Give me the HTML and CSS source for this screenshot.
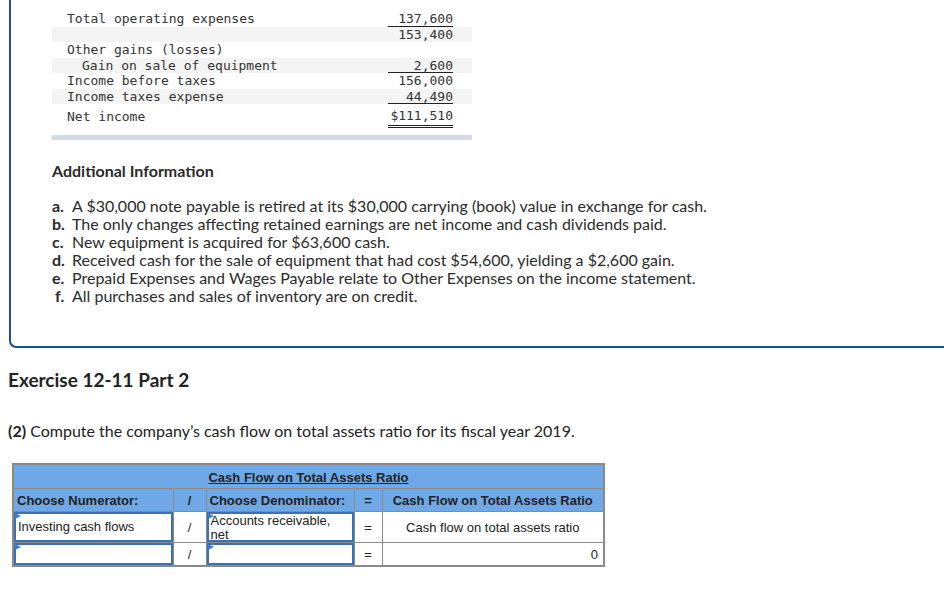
FILE: index.html
```html
<!DOCTYPE html>
<html>
<head>
<meta charset="utf-8">
<link rel="stylesheet" href="styles.css">
</head>
<body>
<div class="panel">
  <div class="stmt">
    <div class="row"><span class="lbl">Total operating expenses</span><span class="val ul">137,600</span></div>
    <div class="row gray"><span class="lbl"></span><span class="val">153,400</span></div>
    <div class="row"><span class="lbl">Other gains (losses)</span><span class="val"></span></div>
    <div class="row gray"><span class="lbl ind">Gain on sale of equipment</span><span class="val ul">2,600</span></div>
    <div class="row"><span class="lbl">Income before taxes</span><span class="val">156,000</span></div>
    <div class="row gray"><span class="lbl">Income taxes expense</span><span class="val ul">44,490</span></div>
    <div class="row net"><span class="lbl">Net income</span><span class="val dbl">$111,510</span></div>
    <div class="bar"></div>
  </div>
  <h3 class="addl">Additional Information</h3>
  <ul class="info">
    <li><b>a.</b><span>A $30,000 note payable is retired at its $30,000 carrying (book) value in exchange for cash.</span></li>
    <li><b>b.</b><span>The only changes affecting retained earnings are net income and cash dividends paid.</span></li>
    <li><b>c.</b><span>New equipment is acquired for $63,600 cash.</span></li>
    <li><b>d.</b><span>Received cash for the sale of equipment that had cost $54,600, yielding a $2,600 gain.</span></li>
    <li><b>e.</b><span>Prepaid Expenses and Wages Payable relate to Other Expenses on the income statement.</span></li>
    <li><b class="f">f.</b><span>All purchases and sales of inventory are on credit.</span></li>
  </ul>
</div>
<h2 class="ex">Exercise 12-11 Part 2</h2>
<p class="q"><b>(2)</b> Compute the company’s cash flow on total assets ratio for its fiscal year 2019.</p>
<table class="ratio">
  <colgroup><col class="c1"><col class="c2"><col class="c3"><col class="c4"><col class="c5"></colgroup>
  <tr class="h1"><th colspan="5"><u>Cash Flow on Total Assets Ratio</u></th></tr>
  <tr class="h2"><th class="left">Choose Numerator:</th><th>/</th><th class="left">Choose Denominator:</th><th>=</th><th>Cash Flow on Total Assets Ratio</th></tr>
  <tr class="r1"><td class="inp"><div class="box">Investing cash flows</div></td><td class="op">/</td><td class="inp"><div class="box two">Accounts receivable,<br>net</div></td><td class="op">=</td><td class="mid">Cash flow on total assets ratio</td></tr>
  <tr class="r2"><td class="inp"><div class="box"></div></td><td class="op">/</td><td class="inp"><div class="box"></div></td><td class="op">=</td><td class="rt">0</td></tr>
</table>
</body>
</html>
```
FILE: styles.css
```css
html, body { margin: 0; padding: 0; background: #fff; }
body { font-family: Lato, "Open Sans", sans-serif; color: #333; width: 944px; }

.panel {
  margin-left: 9px;
  height: 346px;
  border-left: 2px solid #1e4f8e;
  border-bottom: 2px solid #1e4f8e;
  border-bottom-left-radius: 7px;
  padding-left: 41px;
  box-sizing: content-box;
}
.stmt { width: 420px; padding-top: 11px; font-family: "DejaVu Sans Mono", monospace; font-size: 13px; color: #333; }
.row { display: flex; justify-content: space-between; height: 15.5px; line-height: 15.5px; padding: 0 19px 0 15px; }
.row.gray { background: #f4f4f4; }
.lbl { white-space: pre; }
.lbl.ind { padding-left: 15px; }
.val { width: 65px; text-align: right; box-sizing: border-box; height: 15.5px; }
.val.ul { border-bottom: 1px solid #222; }
.row.net { height: 24px; line-height: 25px; }
.val.dbl { height: 24px; border-bottom: 3px double #222; line-height: 24px; }
.bar { height: 5px; background: #d5dbe6; margin-top: 7px; }

.addl { margin: 22px 0 0; font-size: 16px; font-weight: 700; line-height: 18px; color: #2b2b2b; }
.info { list-style: none; margin: 17px 0 0; padding: 0; font-size: 16px; line-height: 18px; color: #2b2b2b; }
.info li { display: flex; }
.info b { width: 20px; font-weight: 700; }
.info b.f { padding-left: 3px; width: 17px; }

.ex { margin: 21px 0 0 8px; font-size: 19px; font-weight: 700; line-height: 22px; color: #222; }
.q { margin: 31px 0 0 8px; font-size: 16px; line-height: 18px; color: #222; }

.ratio {
  margin: 23px 0 0 12px;
  border-collapse: collapse;
  table-layout: fixed;
  width: 591px;
  font-family: "Liberation Sans", Arial, sans-serif;
  font-size: 13px;
  color: #222;
  border: 2px solid #8a8a8a;
}
.c1 { width: 160px; } .c2 { width: 33px; } .c3 { width: 148px; } .c4 { width: 28px; } .c5 { width: 222px; }
.ratio th, .ratio td { border: 1px solid #8a8a8a; padding: 0; }
.ratio th { background: #6fa8e6; font-weight: 700; text-align: center; }
.h1 th { height: 21px; padding-top: 2px; }
.h2 th { height: 22px; }
.ratio th.left { text-align: left; padding-left: 3px; }
.r1 td { height: 30px; }
.r2 td { height: 22px; }
.op { text-align: center; }
.mid { text-align: center; }
.rt { text-align: right; padding-right: 5px !important; }
.inp { position: relative; }
.box {
  position: relative;
  height: 100%;
  min-height: 20px;
  border: 2px solid #3b6fb6;
  box-sizing: border-box;
  display: flex;
  align-items: center;
  padding-left: 2px;
  line-height: 14px;
}
.r1 .box { height: 30px; }
.r2 .box { height: 22px; }
.box::before {
  content: "";
  position: absolute;
  left: -1px; top: -1px;
  border-left: 6px solid #3b7bd0;
  border-top: 3px solid transparent;
  border-bottom: 3px solid transparent;
}
.box.two { align-items: flex-start; }
```
